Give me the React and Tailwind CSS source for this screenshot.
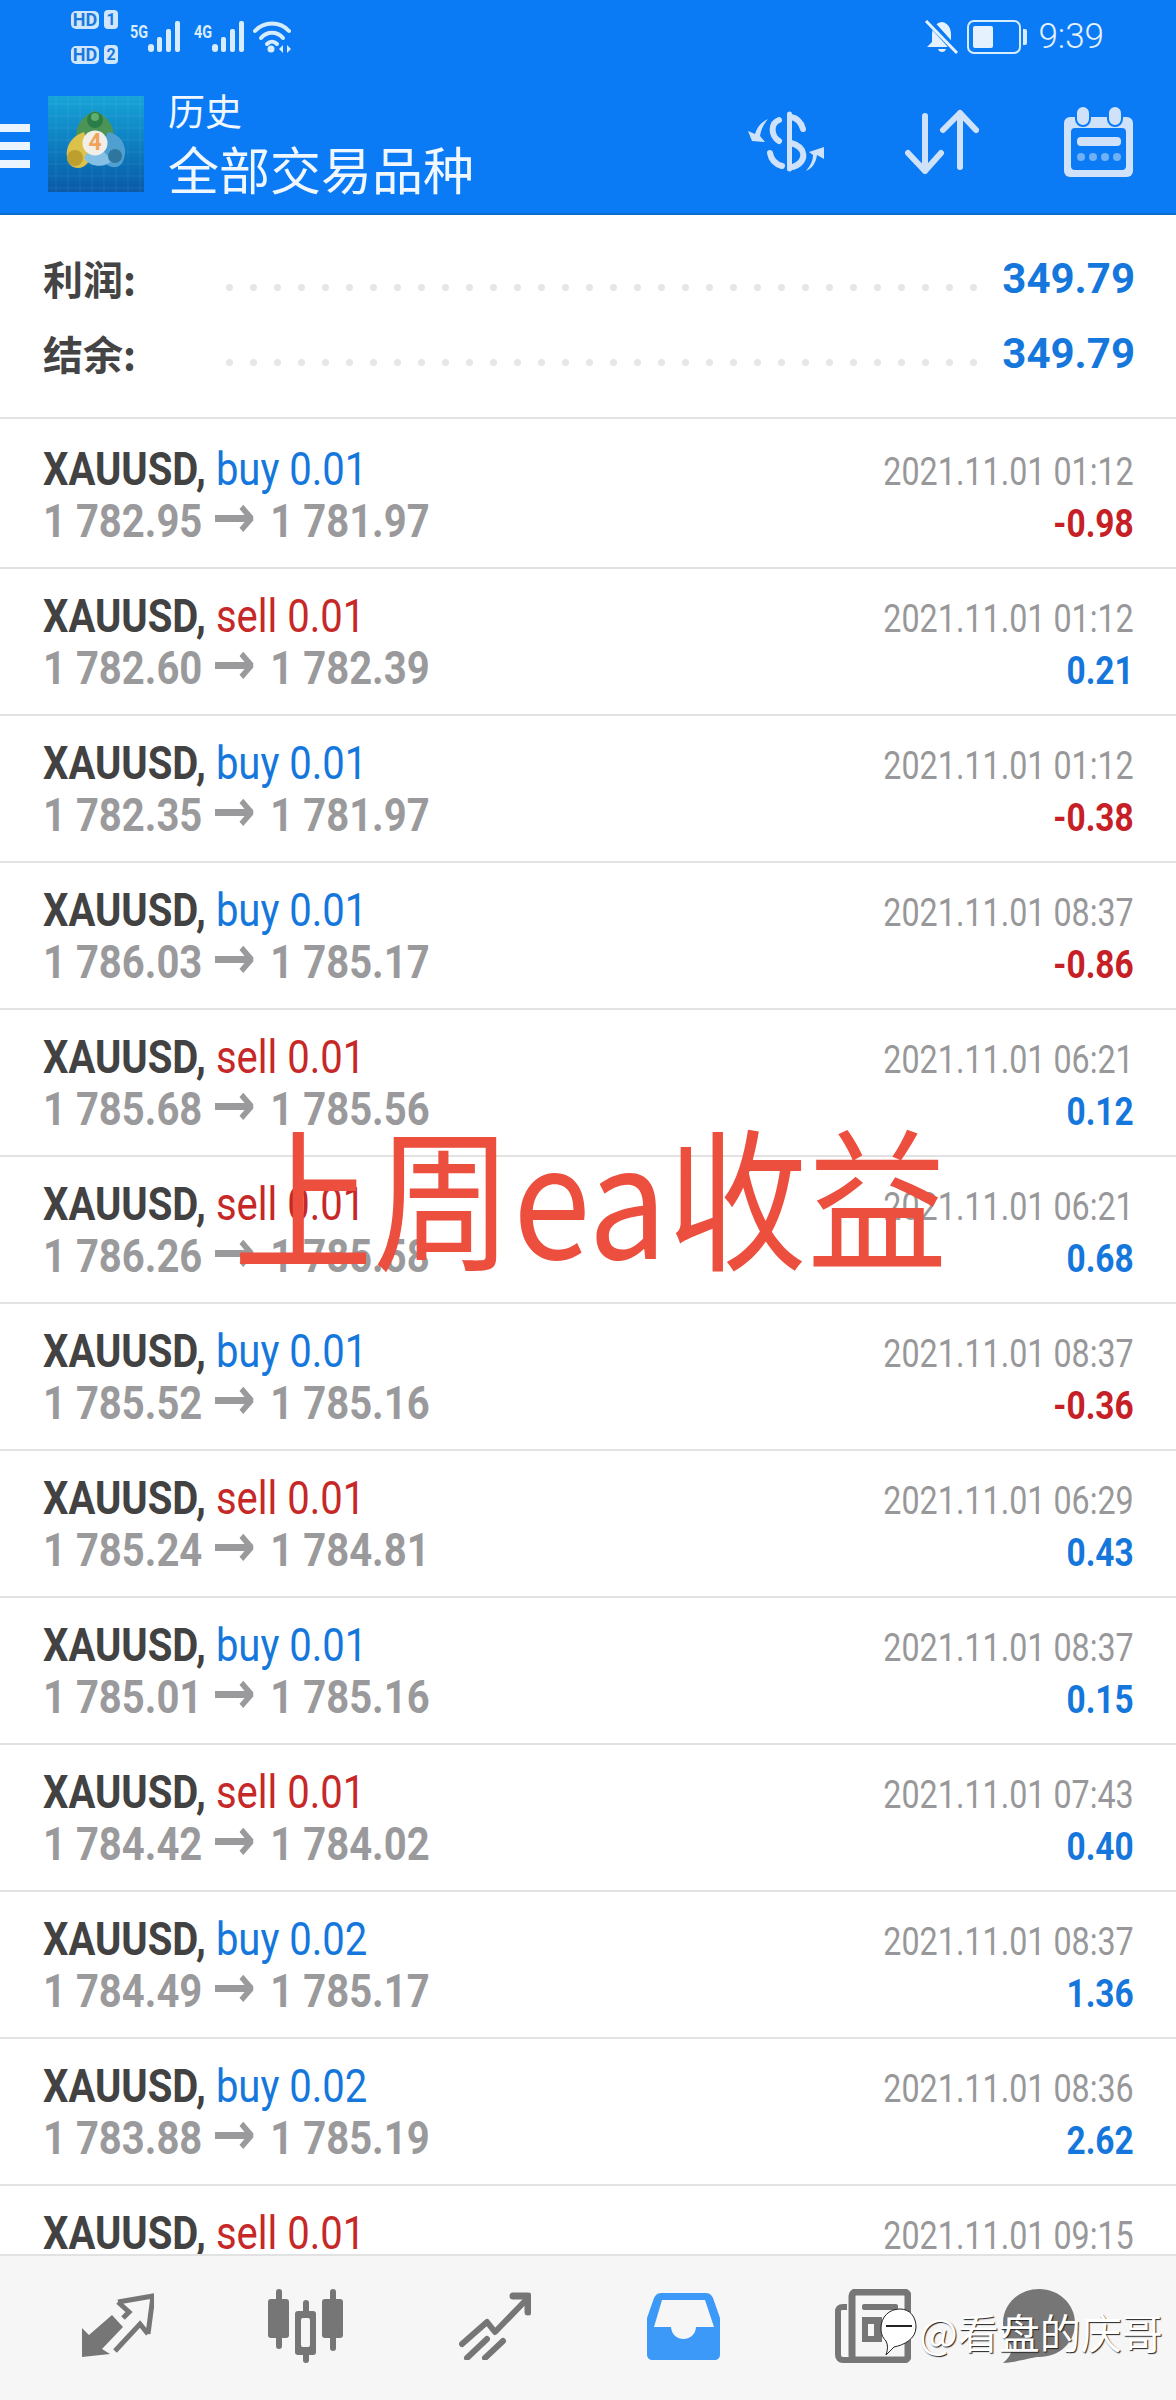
const trades = [
  ["buy", "0.01", "1 782.95", "1 781.97", "2021.11.01 01:12", "-0.98"],
  ["sell", "0.01", "1 782.60", "1 782.39", "2021.11.01 01:12", "0.21"],
  ["buy", "0.01", "1 782.35", "1 781.97", "2021.11.01 01:12", "-0.38"],
  ["buy", "0.01", "1 786.03", "1 785.17", "2021.11.01 08:37", "-0.86"],
  ["sell", "0.01", "1 785.68", "1 785.56", "2021.11.01 06:21", "0.12"],
  ["sell", "0.01", "1 786.26", "1 785.58", "2021.11.01 06:21", "0.68"],
  ["buy", "0.01", "1 785.52", "1 785.16", "2021.11.01 08:37", "-0.36"],
  ["sell", "0.01", "1 785.24", "1 784.81", "2021.11.01 06:29", "0.43"],
  ["buy", "0.01", "1 785.01", "1 785.16", "2021.11.01 08:37", "0.15"],
  ["sell", "0.01", "1 784.42", "1 784.02", "2021.11.01 07:43", "0.40"],
  ["buy", "0.02", "1 784.49", "1 785.17", "2021.11.01 08:37", "1.36"],
  ["buy", "0.02", "1 783.88", "1 785.19", "2021.11.01 08:36", "2.62"],
  ["sell", "0.01", "1 783.10", "1 783.42", "2021.11.01 09:15", "0.32"],
];

function SimBadge({ label }) {
  return (
    <div className="flex items-center gap-[5px] h-[19px]">
      <span className="w-[28px] h-[18px] rounded-[5px] bg-[#cfe6fb] text-[#1a79e0] text-[18px] leading-[18px] font-bold text-center font-['Roboto',sans-serif]">
        HD
      </span>
      <span className="w-[14px] h-[19px] rounded-[4px] bg-[#cfe6fb] text-[#1a79e0] text-[16px] leading-[19px] font-bold text-center font-['Roboto',sans-serif]">
        {label}
      </span>
    </div>
  );
}

function Signal({ label }) {
  return (
    <div className="flex items-start">
      <span className="text-[#d8ecff] text-[18px] leading-[22px] font-bold w-[18px] mt-[1px] font-['Roboto',sans-serif] scale-x-[0.8] origin-left">
        {label}
      </span>
      <svg width="34" height="34" viewBox="0 0 34 34" className="mt-[-1px]">
        <g fill="#d8ecff">
          <rect x="0" y="25" width="6" height="8" rx="3" />
          <rect x="9" y="18" width="5" height="15" rx="2" />
          <rect x="18" y="10" width="5" height="23" rx="2" />
          <rect x="27" y="2" width="5" height="31" rx="2" />
        </g>
      </svg>
    </div>
  );
}

function Wifi() {
  return (
    <svg width="40" height="34" viewBox="0 0 40 34" fill="none" stroke="#d8ecff" strokeWidth="4" strokeLinecap="round" className="ml-[-5px]">
      <path d="M2 11C11 1 27 1 36 11" />
      <path d="M8 18C14 11 24 11 30 18" />
      <path d="M14 24C17 21 21 21 24 24" />
      <circle cx="18" cy="29" r="3.5" fill="#d8ecff" stroke="none" />
      <path d="M30 25l-4 4 4 4zM34 25l4 4-4 4z" fill="#d8ecff" stroke="none" />
    </svg>
  );
}

function Logo() {
  return (
    <div className="relative w-[96px] h-[96px] bg-gradient-to-b from-[#18a4d8] to-[#0a5aa8] shrink-0 flex items-center justify-center">
      <svg width="96" height="96" viewBox="0 0 96 96" className="absolute left-0 top-0">
        <g stroke="#ffffff" strokeOpacity="0.07" strokeWidth="1">
          <path d="M8 0V96M20 0V96M32 0V96M44 0V96M56 0V96M68 0V96M80 0V96M92 0V96" />
          <path d="M0 8H96M0 20H96M0 32H96M0 44H96M0 56H96M0 68H96M0 80H96M0 92H96" />
        </g>
        <path d="M47 15C33 20 26 32 29 44C36 36 58 36 65 44C68 32 60 20 47 15Z" fill="#4c9455" />
        <circle cx="47" cy="24" r="8" fill="#2a7d47" />
        <circle cx="47" cy="21" r="4" fill="#5fae6b" />
        <path d="M19 62C17 50 24 40 36 36L44 60C40 68 36 72 30 72C24 72 20 68 19 62Z" fill="#dcc24a" />
        <circle cx="27" cy="62" r="8" fill="#bd9f30" />
        <path d="M77 58C78 48 72 38 60 36L50 60C56 68 62 72 68 71C74 70 76 64 77 58Z" fill="#4f9fd0" />
        <path d="M36 62C42 72 58 72 64 64L56 56H40Z" fill="#84c0e4" />
        <circle cx="67" cy="60" r="7" fill="#2f769f" />
        <circle cx="47" cy="47" r="12.5" fill="#f2efe8" />
      </svg>
      <span className="relative text-[#f2a25a] text-[23px] font-bold font-['Roboto',sans-serif] mt-[-2px] ml-[-2px]">4</span>
    </div>
  );
}

function ExchangeIcon() {
  return (
    <svg width="80" height="62" viewBox="0 0 80 62" fill="none" stroke="#cfe2fa" strokeLinecap="round">
      <path d="M43.5 3V58" strokeWidth="5" />
      <path d="M45 6C51 7 55 11 57 18" strokeWidth="6" />
      <path d="M33 9C25 12 24 24 33 30" strokeWidth="6" />
      <path d="M45 32C60 36 62 50 47 56" strokeWidth="6" />
      <path d="M24 42C25 48 29 53 36 55" strokeWidth="6" />
      <path d="M22 8C15 11 11 16 9 23L2 20L6 30L19 31L14 25C15 18 18 13 22 8Z" fill="#cfe2fa" stroke="none" />
      <path d="M60 60C67 57 70 51 71 44L78 48V36L63 41L67 44C67 50 64 55 60 60Z" fill="#cfe2fa" stroke="none" />
    </svg>
  );
}

function SortIcon() {
  return (
    <svg width="74" height="66" viewBox="0 0 74 66" fill="none" stroke="#cfe2fa" strokeWidth="6" strokeLinecap="round" strokeLinejoin="round">
      <path d="M20 7V62M3 44L20 62L36 44" />
      <path d="M55 4V58M38 21L55 4L71 21" />
    </svg>
  );
}

function CalendarIcon() {
  return (
    <svg width="70" height="72" viewBox="0 0 70 72">
      <rect x="0" y="11" width="69" height="60" rx="6" fill="#cfe2fa" />
      <rect x="12" y="0" width="14" height="20" rx="7" fill="#cfe2fa" stroke="#0a7bf5" strokeWidth="2" />
      <rect x="44" y="0" width="14" height="20" rx="7" fill="#cfe2fa" stroke="#0a7bf5" strokeWidth="2" />
      <rect x="7" y="22" width="55" height="42" rx="4" fill="#0a7bf5" />
      <rect x="13" y="31" width="44" height="9" rx="4" fill="#cfe2fa" />
      <g fill="#6fb0f7">
        <circle cx="17" cy="51" r="4" />
        <circle cx="29" cy="51" r="4" />
        <circle cx="41" cy="51" r="4" />
        <circle cx="53" cy="51" r="4" />
      </g>
    </svg>
  );
}

function Header() {
  return (
    <header className="bg-[#0a7bf5] h-[215px] border-b-[2px] border-[#0b6dcc] shrink-0">
      <div className="h-[96px] flex justify-between pl-[71px] pr-[72px] pt-[10px]">
        <div className="flex">
          <div className="flex flex-col gap-[16px]">
            <SimBadge label="1" />
            <SimBadge label="2" />
          </div>
          <div className="flex gap-[12px] ml-[12px] mt-[10px] items-start">
            <Signal label="5G" />
            <Signal label="4G" />
            <Wifi />
          </div>
        </div>
        <div className="flex items-start mt-[10px]">
          <svg width="34" height="34" viewBox="0 0 34 34">
            <path d="M17 2C10 3 7 8 7 15V22L2 27H30L26 22V15C26 8 23 3 17 2Z" fill="#e6f1fe" />
            <path d="M13 29C14 33 20 33 21 29Z" fill="#e6f1fe" />
            <path d="M3 0L33 33" stroke="#0a7bf5" strokeWidth="7" />
            <path d="M1 1L32 33" stroke="#e6f1fe" strokeWidth="3" />
          </svg>
          <div className="flex items-center ml-[8px]">
            <div className="w-[54px] h-[34px] rounded-[7px] border-[2px] border-[#d8ecff] p-[4px]">
              <div className="w-[20px] h-full bg-[#e6f1fe] rounded-[2px]" />
            </div>
            <div className="w-[4px] h-[16px] bg-[#d8ecff] rounded-r-[2px] ml-[2px]" />
          </div>
          <span className="ml-[11px] text-[#e6f1fe] text-[35px] leading-[34px] font-light font-['Roboto',sans-serif]">9:39</span>
        </div>
      </div>
      <div className="flex h-[96px] relative">
        <div className="w-[30px] flex flex-col gap-[10px] mt-[28px] shrink-0">
          <div className="h-[8px] bg-[#eaf4ff]" />
          <div className="h-[8px] bg-[#eaf4ff]" />
          <div className="h-[8px] bg-[#eaf4ff]" />
        </div>
        <div className="ml-[18px]">
          <Logo />
        </div>
        <div className="ml-[24px] text-[#f0f7ff] font-['Noto_Sans_CJK_SC',sans-serif]">
          <div className="text-[37px] leading-[40px] mt-[-6px]">历史</div>
          <div className="text-[51px] leading-[58px] mt-[9px]">全部交易品种</div>
        </div>
        <div className="ml-auto flex items-center pr-[42px] pb-[5px]">
          <ExchangeIcon />
          <div className="ml-[79px]"><SortIcon /></div>
          <div className="ml-[85px]"><CalendarIcon /></div>
        </div>
      </div>
    </header>
  );
}

function SummaryRow({ label, value }) {
  return (
    <div className="h-[75px] flex items-center">
      <span className="w-[183px] shrink-0 text-[#444444] text-[40px] leading-[50px] font-bold mt-[-2px] font-['Noto_Sans_CJK_SC',sans-serif]">
        {label}
      </span>
      <div className="flex-1 flex justify-between mt-[18px]">
        {Array.from({ length: 32 }).map((_, i) => (
          <span key={i} className="w-[7px] h-[7px] rounded-full bg-[#e6e6e6]" />
        ))}
      </div>
      <span className="w-[158px] text-right shrink-0 text-[#1577dc] text-[42px] leading-[50px] font-bold font-['Roboto',sans-serif]">
        {value}
      </span>
    </div>
  );
}

function TradeRow({ trade }) {
  const [side, lots, open, close, date, profit] = trade;
  const sideColor = side === "buy" ? "text-[#1577dc]" : "text-[#c62828]";
  const profitColor = profit.startsWith("-") ? "text-[#c62026]" : "text-[#1577dc]";
  return (
    <div className="h-[147px] shrink-0 border-b-[2px] border-[#e2e2e2] flex justify-between pl-[43px] pr-[42px] pt-[21px] font-['Roboto',sans-serif]">
      <div>
        <div className="text-[46px] leading-[52px] whitespace-nowrap origin-left scale-x-[0.87]">
          <span className="font-bold text-[#424242]">XAUUSD,</span>{" "}
          <span className={sideColor}>{side} {lots}</span>
        </div>
        <div className="text-[46px] leading-[52px] font-bold text-[#9a9a9c] whitespace-nowrap origin-left scale-x-[0.87]">
          {open}{" "}
          <span className="text-[60px] leading-[0] mr-[5px] font-['DejaVu_Sans',sans-serif]">→</span>{" "}
          {close}
        </div>
      </div>
      <div className="text-right mt-[3px]">
        <div className="text-[39px] leading-[52px] text-[#98989a] whitespace-nowrap origin-right scale-x-[0.827]">{date}</div>
        <div className={`text-[38px] leading-[52px] font-bold whitespace-nowrap origin-right scale-x-[0.88] ${profitColor}`}>{profit}</div>
      </div>
    </div>
  );
}

function BottomNav() {
  return (
    <nav className="h-[146px] shrink-0 bg-[#f6f6f6] border-t-[2px] border-[#e2e2e2] flex items-center pl-[82px] pb-[4px]">
      <svg width="72" height="66" viewBox="0 0 72 66">
        <path d="M30 25L41 37L20 59L28 64L0 67V38L7 45Z" fill="#767676" transform="translate(0 -3)" />
        <path d="M36 9L71 3L66 41" fill="none" stroke="#767676" strokeWidth="5" />
        <path d="M36 9L47 19L41 25M66 41L58 31L33 58" fill="none" stroke="#767676" strokeWidth="5" />
      </svg>
      <svg width="76" height="74" viewBox="0 0 76 74" className="ml-[114px]" fill="#767676">
        <rect x="0" y="10" width="21" height="39" rx="3" />
        <rect x="8" y="0" width="6" height="60" rx="3" />
        <rect x="54" y="10" width="21" height="39" rx="3" />
        <rect x="62" y="0" width="6" height="62" rx="3" />
        <rect x="27" y="22" width="21" height="44" rx="3" />
        <rect x="35" y="11" width="6" height="63" rx="3" />
        <rect x="33" y="29" width="9" height="29" rx="2" fill="#f6f6f6" />
      </svg>
      <svg width="72" height="68" viewBox="0 0 72 68" className="ml-[115px]" fill="none" stroke="#767676" strokeWidth="6" strokeLinecap="round" strokeLinejoin="round">
        <path d="M3 52L28 30L36 40L69 6" />
        <path d="M54 4H69V20" strokeWidth="7" />
        <path d="M8 66L28 47M26 66L44 49" />
      </svg>
      <svg width="73" height="67" viewBox="0 0 73 67" className="ml-[116px]">
        <path d="M14 0H59C63 0 65 3 66 5L73 25V61C73 65 71 67 67 67H6C2 67 0 65 0 61V25L7 5C8 3 10 0 14 0Z" fill="#3d99f8" />
        <path d="M15 7H58L67 34H49C48 50 25 50 24 34H7Z" fill="#f6f6f6" />
      </svg>
      <svg width="76" height="74" viewBox="0 0 76 74" className="ml-[115px]" fill="none">
        <rect x="17" y="3" width="56" height="68" rx="4" stroke="#767676" strokeWidth="7" />
        <path d="M12 18H8C4 18 3 20 3 23V66C3 69 5 71 8 71H20" stroke="#767676" strokeWidth="6" />
        <rect x="27" y="15" width="36" height="6" rx="2" fill="#767676" />
        <rect x="27" y="28" width="20" height="25" fill="#767676" />
        <rect x="33" y="35" width="6" height="12" fill="#f6f6f6" />
      </svg>
      <svg width="72" height="74" viewBox="0 0 72 74" className="ml-[92px]">
        <path d="M36 0C56 0 72 15 72 34C72 54 56 68 36 68C28 68 16 73 0 74C7 68 10 62 8 56C3 50 0 43 0 34C0 15 16 0 36 0Z" fill="#767676" />
      </svg>
    </nav>
  );
}

export default function App() {
  return (
    <div className="relative w-[1176px] h-[2400px] overflow-hidden bg-white flex flex-col">
      <Header />
      <div className="flex-1 overflow-hidden">
        <div className="h-[204px] border-b-[2px] border-[#e2e2e2] pl-[43px] pr-[41px] pt-[26px]">
          <SummaryRow label="利润:" value="349.79" />
          <SummaryRow label="结余:" value="349.79" />
        </div>
        <div className="pt-[3px]">
          {trades.map((trade, i) => (
            <TradeRow key={i} trade={trade} />
          ))}
        </div>
      </div>
      <BottomNav />

      <div className="absolute left-[233px] top-[1110px] text-[#ec4f3d] text-[140px] leading-[164px] font-normal whitespace-nowrap scale-y-[1.1] font-['Noto_Sans_CJK_SC',sans-serif]">
        上周ea收益
      </div>

      <div className="absolute left-[880px] top-[2306px] flex items-center text-white text-[41px] leading-[50px] whitespace-nowrap font-['Noto_Sans_CJK_SC',sans-serif] [text-shadow:1px_1px_1px_#222]">
        <svg width="38" height="48" viewBox="0 0 38 48" className="mr-[1px]">
          <path d="M20 2C30 2 36 10 36 20C36 32 24 38 14 40L6 48C8 42 8 38 6 34C2 30 1 26 1 21C1 10 9 2 20 2Z" fill="#ffffff" stroke="#222222" strokeWidth="1" />
          <path d="M6 19H32" stroke="#222222" strokeWidth="2" />
        </svg>
        @看盘的庆哥
      </div>
    </div>
  );
}
